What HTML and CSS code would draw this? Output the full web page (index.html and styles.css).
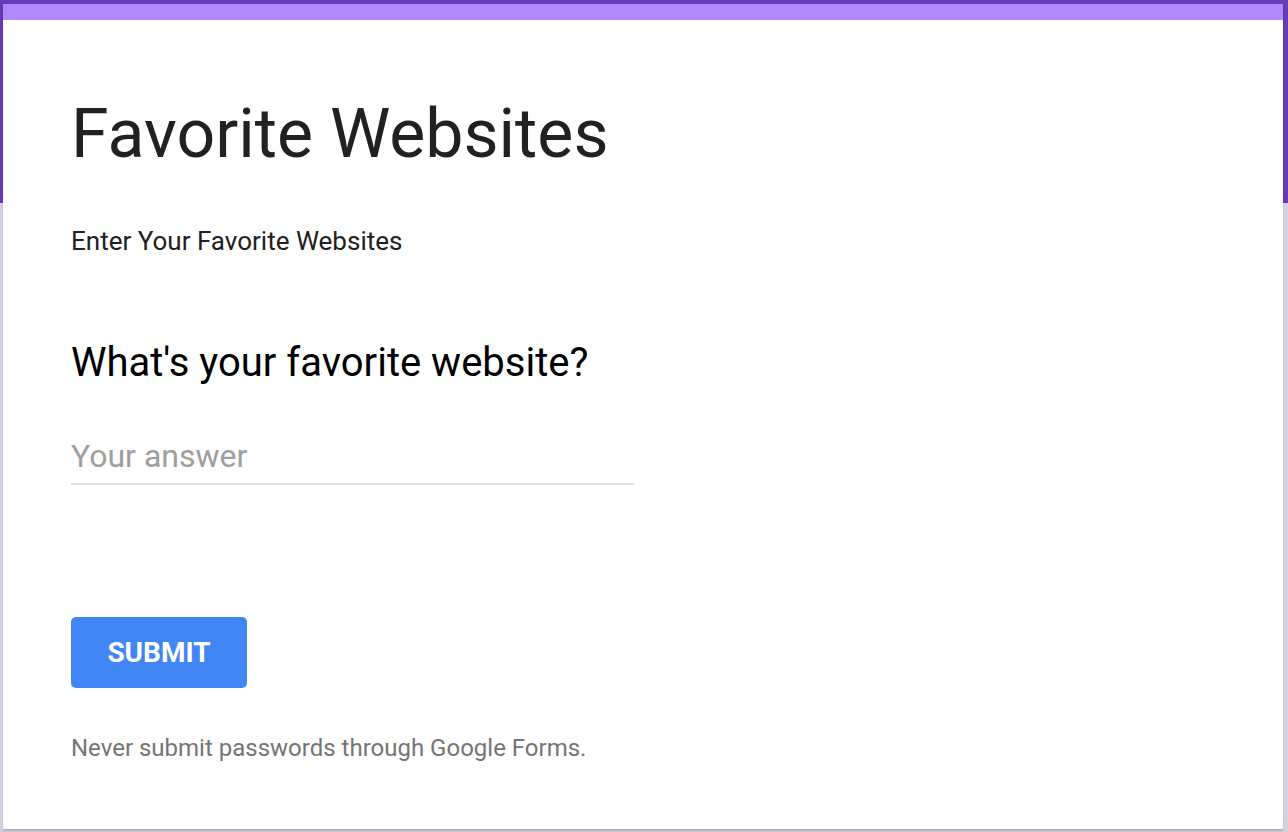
FILE: index.html
```html
<!DOCTYPE html>
<html lang="en">
<head>
<meta charset="utf-8">
<title>Favorite Websites</title>
<link rel="stylesheet" href="styles.css">
</head>
<body>
<div class="page">
  <main class="card">
    <div class="stripe"></div>
    <div class="content">
      <h1 class="title">Favorite Websites</h1>
      <p class="desc">Enter Your Favorite Websites</p>
      <h2 class="question">What's your favorite website?</h2>
      <div class="answer"><span class="placeholder">Your answer</span></div>
      <button class="submit" type="button">SUBMIT</button>
      <p class="note">Never submit passwords through Google Forms.</p>
    </div>
  </main>
</div>
</body>
</html>
```
FILE: styles.css
```css
html, body {
  margin: 0;
  padding: 0;
  height: 100%;
}
body {
  font-family: Roboto, "Liberation Sans", Arial, sans-serif;
  background: linear-gradient(#673ab7 0, #673ab7 203px, #d6d2e3 203px, #d6d2e3 100%);
  overflow: hidden;
}
.page {
  padding: 4px 5px 0 3px;
}
.card {
  background: #fff;
  height: 825px;
  box-shadow: 0 2px 2px rgba(0,0,0,0.18);
  display: flex;
  flex-direction: column;
}
.stripe {
  height: 16px;
  background: #b388fa;
}
.content {
  padding: 74px 0 0 68px;
  display: flex;
  flex-direction: column;
  align-items: flex-start;
}
.title {
  margin: 0;
  font-weight: 400;
  font-size: 68px;
  line-height: 80px;
  color: #212121;
}
.desc {
  margin: 51px 0 0;
  font-size: 26px;
  line-height: 32px;
  color: #212121;
}
.question {
  margin: 82px 0 0;
  font-weight: 400;
  font-size: 40px;
  line-height: 48px;
  color: #000;
}
.answer {
  margin-top: 49px;
  width: 563px;
  padding-bottom: 7px;
  border-bottom: 2px solid #e0e0e0;
  font-size: 32px;
  line-height: 40px;
}
.placeholder {
  color: #9e9e9e;
}
.submit {
  margin-top: 132px;
  width: 176px;
  height: 71px;
  border: none;
  border-radius: 5px;
  background: #4285f4;
  color: #fff;
  font-family: Roboto, "Liberation Sans", Arial, sans-serif;
  font-weight: 700;
  font-size: 28px;
  padding: 0;
}
.note {
  margin: 44px 0 0;
  font-size: 24px;
  line-height: 32px;
  color: #757575;
}
```
